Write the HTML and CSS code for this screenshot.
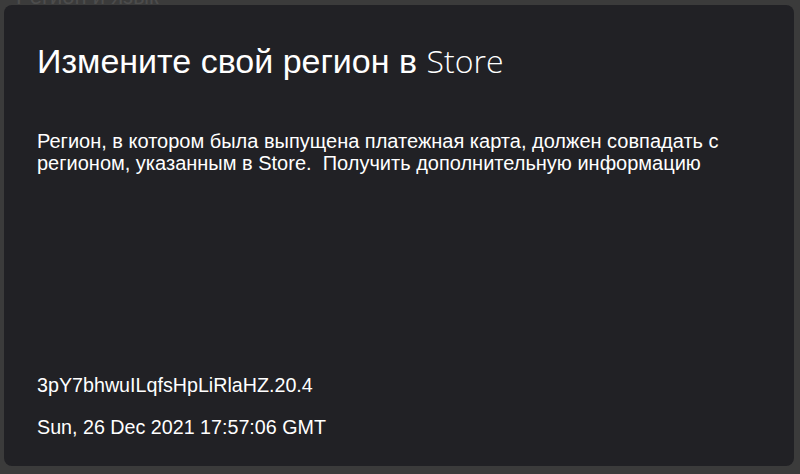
FILE: index.html
```html
<!DOCTYPE html>
<html lang="ru">
<head>
<meta charset="utf-8">
<title>Store</title>
<link rel="stylesheet" href="styles.css">
</head>
<body>
<div class="behind">Регион и язык</div>
<main class="card">
  <h1 class="title">Измените свой регион в <span class="brand">Store</span></h1>
  <p class="text">Регион, в котором была выпущена платежная карта, должен совпадать с регионом, указанным в Store.&nbsp; Получить дополнительную информацию</p>
  <div class="meta">
    <p class="meta-line">3pY7bhwuILqfsHpLiRlaHZ.20.4</p>
    <p class="meta-line">Sun, 26 Dec 2021 17:57:06 GMT</p>
  </div>
</main>
</body>
</html>
```
FILE: styles.css
```css
html, body {
  margin: 0;
  padding: 0;
  background: #3b3b3b;
  width: 800px;
  height: 474px;
  overflow: hidden;
  position: relative;
}
.behind {
  position: absolute;
  left: 16px;
  top: -16px;
  font: 22px "Liberation Sans", Arial, sans-serif;
  color: #4d4d4d;
}
.card {
  position: relative;
  margin: 5px 6px 0 4px;
  height: 461px;
  box-sizing: border-box;
  background: #212125;
  border-radius: 8px;
  padding: 36px 33px 0 33px;
  display: flex;
  flex-direction: column;
  color: #ffffff;
  font-family: "Liberation Sans", Arial, sans-serif;
}
.title {
  margin: 0;
  font-size: 34px;
  font-weight: 400;
  line-height: 40px;
}
.brand {
  font-family: "Open Sans", "Segoe UI", sans-serif;
  font-weight: 300;
  font-size: 32px;
}
.text {
  margin: 49px 0 0 0;
  font-size: 20px;
  line-height: 22px;
  max-width: 720px;
}
.meta {
  margin-top: auto;
  padding-bottom: 28px;
}
.meta-line {
  margin: 0;
  font-size: 19.7px;
  line-height: 22px;
}
.meta-line + .meta-line {
  margin-top: 20px;
}
```
